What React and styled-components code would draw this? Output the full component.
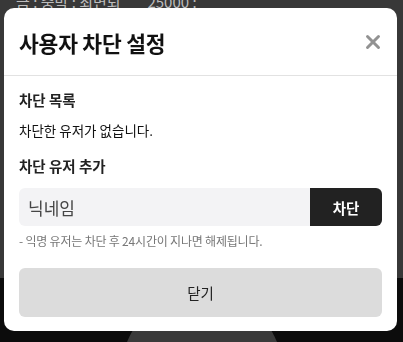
import styled, { createGlobalStyle } from 'styled-components';
import { useState } from 'react';
import { X } from 'lucide-react';

const GlobalStyle = createGlobalStyle`
  html, body {
    margin: 0;
    padding: 0;
    background: #383838;
    font-family: "Noto Sans CJK KR", "Noto Sans", sans-serif;
    overflow: hidden;
  }
`;

// Page behind the dialog
const Page = styled.div`
  height: 342px;
  display: flex;
  flex-direction: column;
  background: #383838;
`;

const TopLine = styled.div`
  margin-top: -6px;
  padding-left: 16px;
  font-size: 15px;
  line-height: 16px;
  color: #bdbdbd;
  white-space: pre;
`;

const Hero = styled.div`
  margin-top: auto;
  height: 64px;
  background: #0c0c0c;
  display: flex;
  justify-content: center;
`;

// Dialog
const Overlay = styled.div`
  position: fixed;
  inset: 0;
  display: flex;
  align-items: flex-start;
  padding: 8px 0 0 4px;
`;

const Modal = styled.div`
  width: 393px;
  background: #ffffff;
  border-radius: 10px;
  overflow: hidden;
`;

const Header = styled.div`
  height: 67px;
  display: flex;
  align-items: center;
  justify-content: space-between;
  padding: 0 13px 0 15px;
  border-bottom: 1px solid #e2e2e2;
`;

const Title = styled.h2`
  margin: 2px 0 0;
  font-size: 21.5px;
  font-weight: 700;
  color: #111;
  letter-spacing: -0.01em;
`;

const CloseIcon = styled.button`
  width: 22px;
  height: 22px;
  padding: 0;
  border: none;
  background: none;
  color: #929292;
  display: flex;
  align-items: center;
  justify-content: center;
  cursor: pointer;
`;

const Body = styled.div`
  padding: 14px 15px 14px;
  display: flex;
  flex-direction: column;
`;

const Label = styled.h3`
  margin: ${p => p.$top || 0}px 0 0;
  font-size: 14.5px;
  line-height: 20px;
  font-weight: 700;
  color: #222;
`;

const Text = styled.p`
  margin: 10px 0 0;
  font-size: 13.5px;
  line-height: 20px;
  color: #111;
`;

const InputRow = styled.div`
  margin-top: 12px;
  height: 38px;
  display: flex;
`;

const Input = styled.input`
  flex: 1;
  min-width: 0;
  border: none;
  outline: none;
  background: #f3f3f5;
  border-radius: 6px 0 0 6px;
  padding: 0 9px;
  font-family: inherit;
  font-size: 17px;
  color: #444;

  &::placeholder {
    color: #454545;
  }
`;

const BlockButton = styled.button`
  width: 72px;
  border: none;
  background: #222222;
  color: #fff;
  border-radius: 0 6px 6px 0;
  font-family: inherit;
  font-size: 14.5px;
  font-weight: 700;
  cursor: pointer;
`;

const Hint = styled.p`
  margin: 7px 0 0;
  font-size: 12px;
  line-height: 16px;
  color: #777;
  letter-spacing: -0.2px;
`;

const FooterButton = styled.button`
  margin-top: 19px;
  height: 49px;
  border: none;
  border-radius: 6px;
  background: #dcdcdc;
  color: #222;
  font-family: inherit;
  font-size: 14.5px;
  cursor: pointer;
`;

export default function App() {
  const [nickname, setNickname] = useState('');

  return (
    <>
      <GlobalStyle />
      <Page>
        <TopLine>{'금 : 중박 : 최면되        25000 :'}</TopLine>
        <Hero>
          <svg width="150" height="64" viewBox="0 0 150 64">
            <path d="M0 64 C12 36 34 12 75 10 C116 12 138 36 150 64 Z" fill="#3a3a3a" />
          </svg>
        </Hero>
      </Page>

      <Overlay>
        <Modal>
          <Header>
            <Title>사용자 차단 설정</Title>
            <CloseIcon aria-label="닫기">
              <X size={22} strokeWidth={3.2} />
            </CloseIcon>
          </Header>
          <Body>
            <Label>차단 목록</Label>
            <Text>차단한 유저가 없습니다.</Text>
            <Label $top={16}>차단 유저 추가</Label>
            <InputRow>
              <Input
                placeholder="닉네임"
                value={nickname}
                onChange={e => setNickname(e.target.value)}
              />
              <BlockButton>차단</BlockButton>
            </InputRow>
            <Hint>- 익명 유저는 차단 후 24시간이 지나면 해제됩니다.</Hint>
            <FooterButton>닫기</FooterButton>
          </Body>
        </Modal>
      </Overlay>
    </>
  );
}
